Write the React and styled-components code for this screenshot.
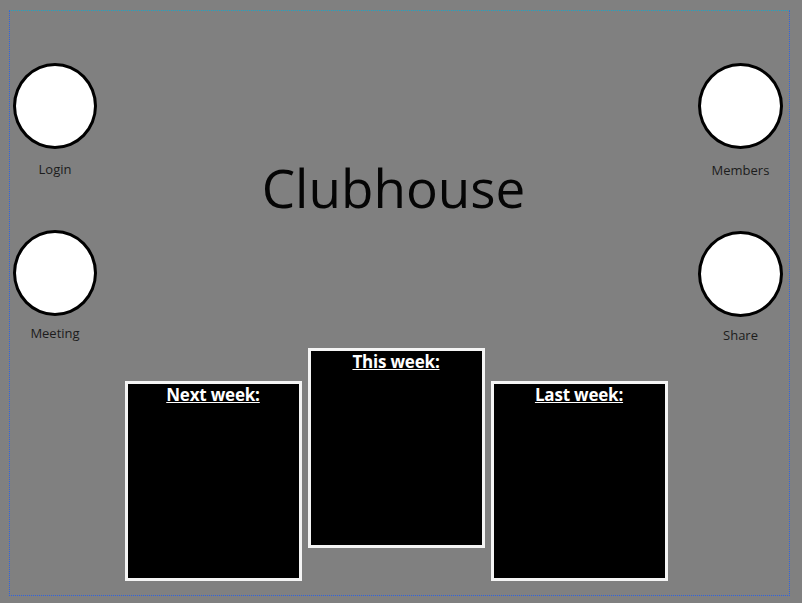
import React from 'react';
import styled, { createGlobalStyle } from 'styled-components';

const GlobalStyle = createGlobalStyle`
  html, body {
    margin: 0;
    padding: 0;
    background-color: #808080;
  }
  body {
    font-family: "Open Sans", "Liberation Sans", sans-serif;
  }
`;

const Frame = styled.div`
  box-sizing: border-box;
  width: 781px;
  height: 586px;
  margin: 10px 0 0 9px;
  border: 1px dotted #2f62e0;
  border-top-color: #1fa3c4;
  padding: 52px 6px 0 3px;
  display: flex;
  flex-direction: column;
`;

const Header = styled.div`
  display: grid;
  grid-template-columns: 84px 1fr 85px;
`;

const SideColumn = styled.div`
  display: flex;
  flex-direction: column;
  gap: 53px;
`;

const Action = styled.div`
  display: flex;
  flex-direction: column;
  align-items: center;
  gap: ${p => p.$gap || 11}px;
`;

const Circle = styled.button`
  box-sizing: border-box;
  width: ${p => p.$w || 84}px;
  height: 86px;
  border-radius: 50%;
  border: 3px solid #000;
  background: #fff;
  padding: 0;
  cursor: pointer;
`;

const Label = styled.span`
  font-size: 13px;
  line-height: 16px;
  font-weight: 500;
  color: #1c1c1c;
`;

const Title = styled.h1`
  margin: 95px 0 0 0;
  padding-right: 8px;
  text-align: center;
  font-size: 53px;
  line-height: 60px;
  font-weight: 500;
  color: #050505;
`;

const Weeks = styled.div`
  display: flex;
  justify-content: center;
  align-items: flex-start;
  gap: 6px;
  margin-top: 5px;
  padding-right: 4px;
`;

const WeekBox = styled.section`
  box-sizing: border-box;
  width: 177px;
  height: 200px;
  margin-top: ${p => (p.$raised ? 0 : 33)}px;
  border: 3px solid #f4f4f4;
  background: #000;
`;

const WeekTitle = styled.h2`
  margin: 0;
  padding-top: 1px;
  text-align: center;
  font-size: 17px;
  line-height: 20px;
  font-weight: 700;
  color: #fff;
  text-decoration: underline;
  letter-spacing: -0.2px;
`;

export default function App() {
  return (
    <>
      <GlobalStyle />
      <Frame>
        <Header>
          <SideColumn>
            <Action $gap={12}>
              <Circle aria-label="Login" />
              <Label>Login</Label>
            </Action>
            <Action $gap={9}>
              <Circle aria-label="Meeting" />
              <Label>Meeting</Label>
            </Action>
          </SideColumn>
          <Title>Clubhouse</Title>
          <SideColumn>
            <Action $gap={13}>
              <Circle $w={85} aria-label="Members" />
              <Label>Members</Label>
            </Action>
            <Action $gap={10}>
              <Circle $w={85} aria-label="Share" />
              <Label>Share</Label>
            </Action>
          </SideColumn>
        </Header>
        <Weeks>
          <WeekBox>
            <WeekTitle>Next week:</WeekTitle>
          </WeekBox>
          <WeekBox $raised>
            <WeekTitle>This week:</WeekTitle>
          </WeekBox>
          <WeekBox>
            <WeekTitle>Last week:</WeekTitle>
          </WeekBox>
        </Weeks>
      </Frame>
    </>
  );
}
